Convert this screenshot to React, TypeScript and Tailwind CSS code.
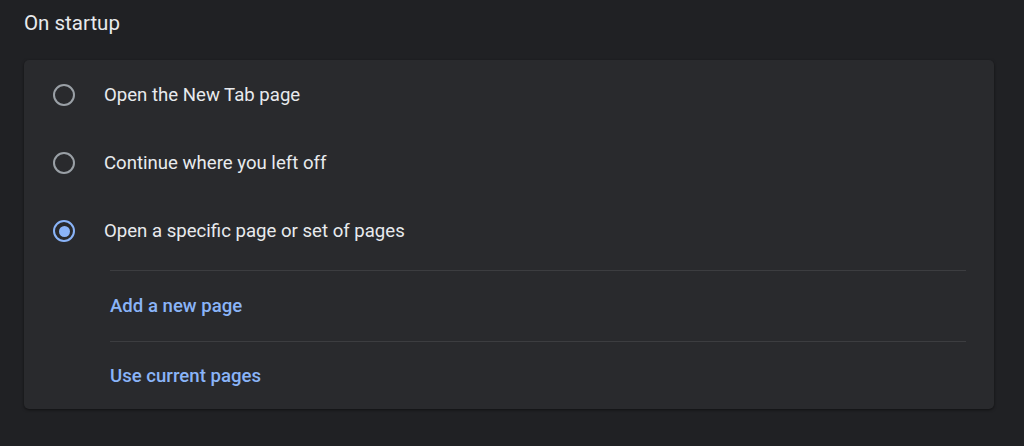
import React from 'react';

const options = [
  { label: 'Open the New Tab page', checked: false },
  { label: 'Continue where you left off', checked: false },
  { label: 'Open a specific page or set of pages', checked: true },
];

const links = ['Add a new page', 'Use current pages'];

const Radio: React.FC<{ checked: boolean }> = ({ checked }) => (
  <span
    className={`flex h-[22px] w-[22px] items-center justify-center rounded-full border-[2.5px] ${
      checked ? 'border-[#8ab4f8]' : 'border-[#9aa0a6]'
    }`}
  >
    {checked && <span className="h-[11px] w-[11px] rounded-full bg-[#8ab4f8]" />}
  </span>
);

export default function App() {
  return (
    <div
      className="h-[446px] w-[1024px] overflow-hidden bg-[#202124] pl-[24px] pr-[30px] text-[#e8eaed]"
      style={{ fontFamily: 'Roboto, "Noto Sans", sans-serif' }}
    >
      <h2 className="flex h-[46px] items-center text-[20.5px] font-normal">On startup</h2>
      <div className="mt-[14px] rounded-[5px] bg-[#292a2d] pt-px shadow-[0_1px_3px_rgba(0,0,0,0.5)]">
        {options.map((o) => (
          <div key={o.label} className="flex h-[68px] items-center">
            <div className="flex w-[80px] justify-center">
              <Radio checked={o.checked} />
            </div>
            <span className="pt-[2px] text-[18.6px]">{o.label}</span>
          </div>
        ))}
        <div className="pl-[86px] pr-[28px] pt-[5px]">
          {links.map((l, i) => (
            <div
              key={l}
              className={`flex items-center border-t border-[#3c3d40] ${i === 0 ? 'h-[71px]' : 'h-[68px]'}`}
            >
              <span className="pt-[2px] text-[18.6px] font-medium text-[#8ab4f8]">{l}</span>
            </div>
          ))}
        </div>
      </div>
    </div>
  );
}
